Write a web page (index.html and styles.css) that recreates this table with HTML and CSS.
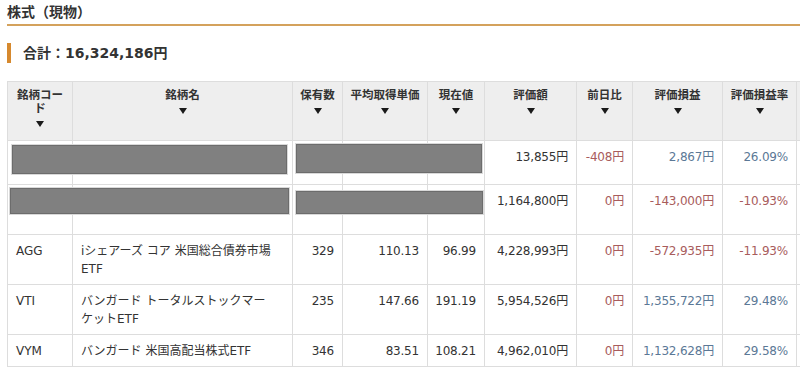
FILE: index.html
```html
<!DOCTYPE html>
<html lang="ja">
<head>
<meta charset="utf-8">
<link rel="stylesheet" href="styles.css">
</head>
<body>
<h2 class="title">株式（現物）</h2>
<div class="total">合計：16,324,186円</div>
<div class="wrap">
  <table class="stocks">
    <colgroup>
      <col class="c1"><col class="c2"><col class="c3"><col class="c4"><col class="c5"><col class="c6"><col class="c7"><col class="c8"><col class="c9"><col class="c10">
    </colgroup>
    <thead>
      <tr>
        <th>銘柄コード<span class="tri"></span></th>
        <th>銘柄名<span class="tri"></span></th>
        <th>保有数<span class="tri"></span></th>
        <th>平均取得単価<span class="tri"></span></th>
        <th>現在値<span class="tri"></span></th>
        <th>評価額<span class="tri"></span></th>
        <th>前日比<span class="tri"></span></th>
        <th>評価損益<span class="tri"></span></th>
        <th>評価損益率<span class="tri"></span></th>
        <th></th>
      </tr>
    </thead>
    <tbody>
      <tr class="r1">
        <td></td><td class="name"></td><td></td><td></td><td></td>
        <td class="num">13,855円</td>
        <td class="num neg">-408円</td>
        <td class="num pos">2,867円</td>
        <td class="num pos">26.09%</td>
        <td></td>
      </tr>
      <tr class="r2">
        <td></td><td class="name"></td><td></td><td></td><td></td>
        <td class="num">1,164,800円</td>
        <td class="num neg">0円</td>
        <td class="num neg">-143,000円</td>
        <td class="num neg">-10.93%</td>
        <td></td>
      </tr>
      <tr>
        <td>AGG</td>
        <td class="name">iシェアーズ コア 米国総合債券市場ETF</td>
        <td class="num">329</td>
        <td class="num">110.13</td>
        <td class="num">96.99</td>
        <td class="num">4,228,993円</td>
        <td class="num neg">0円</td>
        <td class="num neg">-572,935円</td>
        <td class="num neg">-11.93%</td>
        <td></td>
      </tr>
      <tr>
        <td>VTI</td>
        <td class="name">バンガード トータルストックマーケットETF</td>
        <td class="num">235</td>
        <td class="num">147.66</td>
        <td class="num">191.19</td>
        <td class="num">5,954,526円</td>
        <td class="num neg">0円</td>
        <td class="num pos">1,355,722円</td>
        <td class="num pos">29.48%</td>
        <td></td>
      </tr>
      <tr>
        <td>VYM</td>
        <td class="name">バンガード 米国高配当株式ETF</td>
        <td class="num">346</td>
        <td class="num">83.51</td>
        <td class="num">108.21</td>
        <td class="num">4,962,010円</td>
        <td class="num neg">0円</td>
        <td class="num pos">1,132,628円</td>
        <td class="num pos">29.58%</td>
        <td></td>
      </tr>
    </tbody>
  </table>
  <div class="mask mask-a"></div>
  <div class="mask mask-b"></div>
  <div class="mask mask-c"></div>
  <div class="mask mask-d"></div>
</div>
</body>
</html>
```

FILE: styles.css
```css
html, body {
  margin: 0;
  padding: 0;
  background: #ffffff;
}
body {
  font-family: "DejaVu Sans", "Noto Sans CJK JP", sans-serif;
  color: #333333;
  overflow: hidden;
}
.title {
  margin: 0 0 0 7px;
  padding-top: 1px;
  font-size: 14px;
  line-height: 23px;
  font-weight: bold;
  color: #333333;
  border-bottom: 2px solid #d4a25c;
}
.total {
  margin: 17px 0 0 7px;
  padding-left: 12px;
  border-left: 4px solid #d6892e;
  font-size: 14px;
  line-height: 20px;
  font-weight: bold;
  color: #333333;
}
.wrap {
  position: relative;
  margin: 18px 0 0 7px;
  width: 793px;
  overflow: hidden;
}
.stocks {
  border-collapse: collapse;
  table-layout: fixed;
  width: 849px;
  font-size: 12px;
}
.c1 { width: 65px; }
.c2 { width: 220px; }
.c3 { width: 50px; }
.c4 { width: 85px; }
.c5 { width: 57px; }
.c6 { width: 92px; }
.c7 { width: 56px; }
.c8 { width: 90px; }
.c9 { width: 74px; }
.c10 { width: 60px; }
.stocks th {
  background: #eeeeee;
  border: 1px solid #dddddd;
  vertical-align: top;
  padding: 7px 4px 0;
  height: 51px;
  font-size: 11.5px;
  line-height: 13px;
  font-weight: bold;
  text-align: center;
  color: #333333;
  box-sizing: content-box;
}
.tri {
  display: block;
  width: 0;
  height: 0;
  margin: 6px auto 0;
  border-left: 4px solid transparent;
  border-right: 4px solid transparent;
  border-top: 6px solid #1a1a1a;
}
.stocks td {
  border: 1px solid #dddddd;
  padding: 7px 8px 6px;
  line-height: 18px;
  vertical-align: top;
  text-align: left;
  color: #333333;
}
.stocks td.name {
  padding-right: 20px;
}
.stocks td.num {
  text-align: right;
  padding-left: 0;
  padding-right: 8px;
  white-space: nowrap;
  letter-spacing: -0.2px;
}
.stocks td.neg { color: #a85c5c; }
.stocks td.pos { color: #5b7896; }
.r1 td { height: 30px; }
.r2 td { height: 36px; }
.mask {
  position: absolute;
  background: #808080;
  border: 1px solid #6c6c6c;
  box-sizing: border-box;
  box-shadow: 0 0 0 1px #d9d9d9;
}
.mask-a { left: 5px; top: 64px; width: 275px; height: 29px; }
.mask-b { left: 289px; top: 63px; width: 186px; height: 29px; }
.mask-c { left: 3px; top: 107px; width: 279px; height: 26px; }
.mask-d { left: 289px; top: 110px; width: 187px; height: 23px; }
```
